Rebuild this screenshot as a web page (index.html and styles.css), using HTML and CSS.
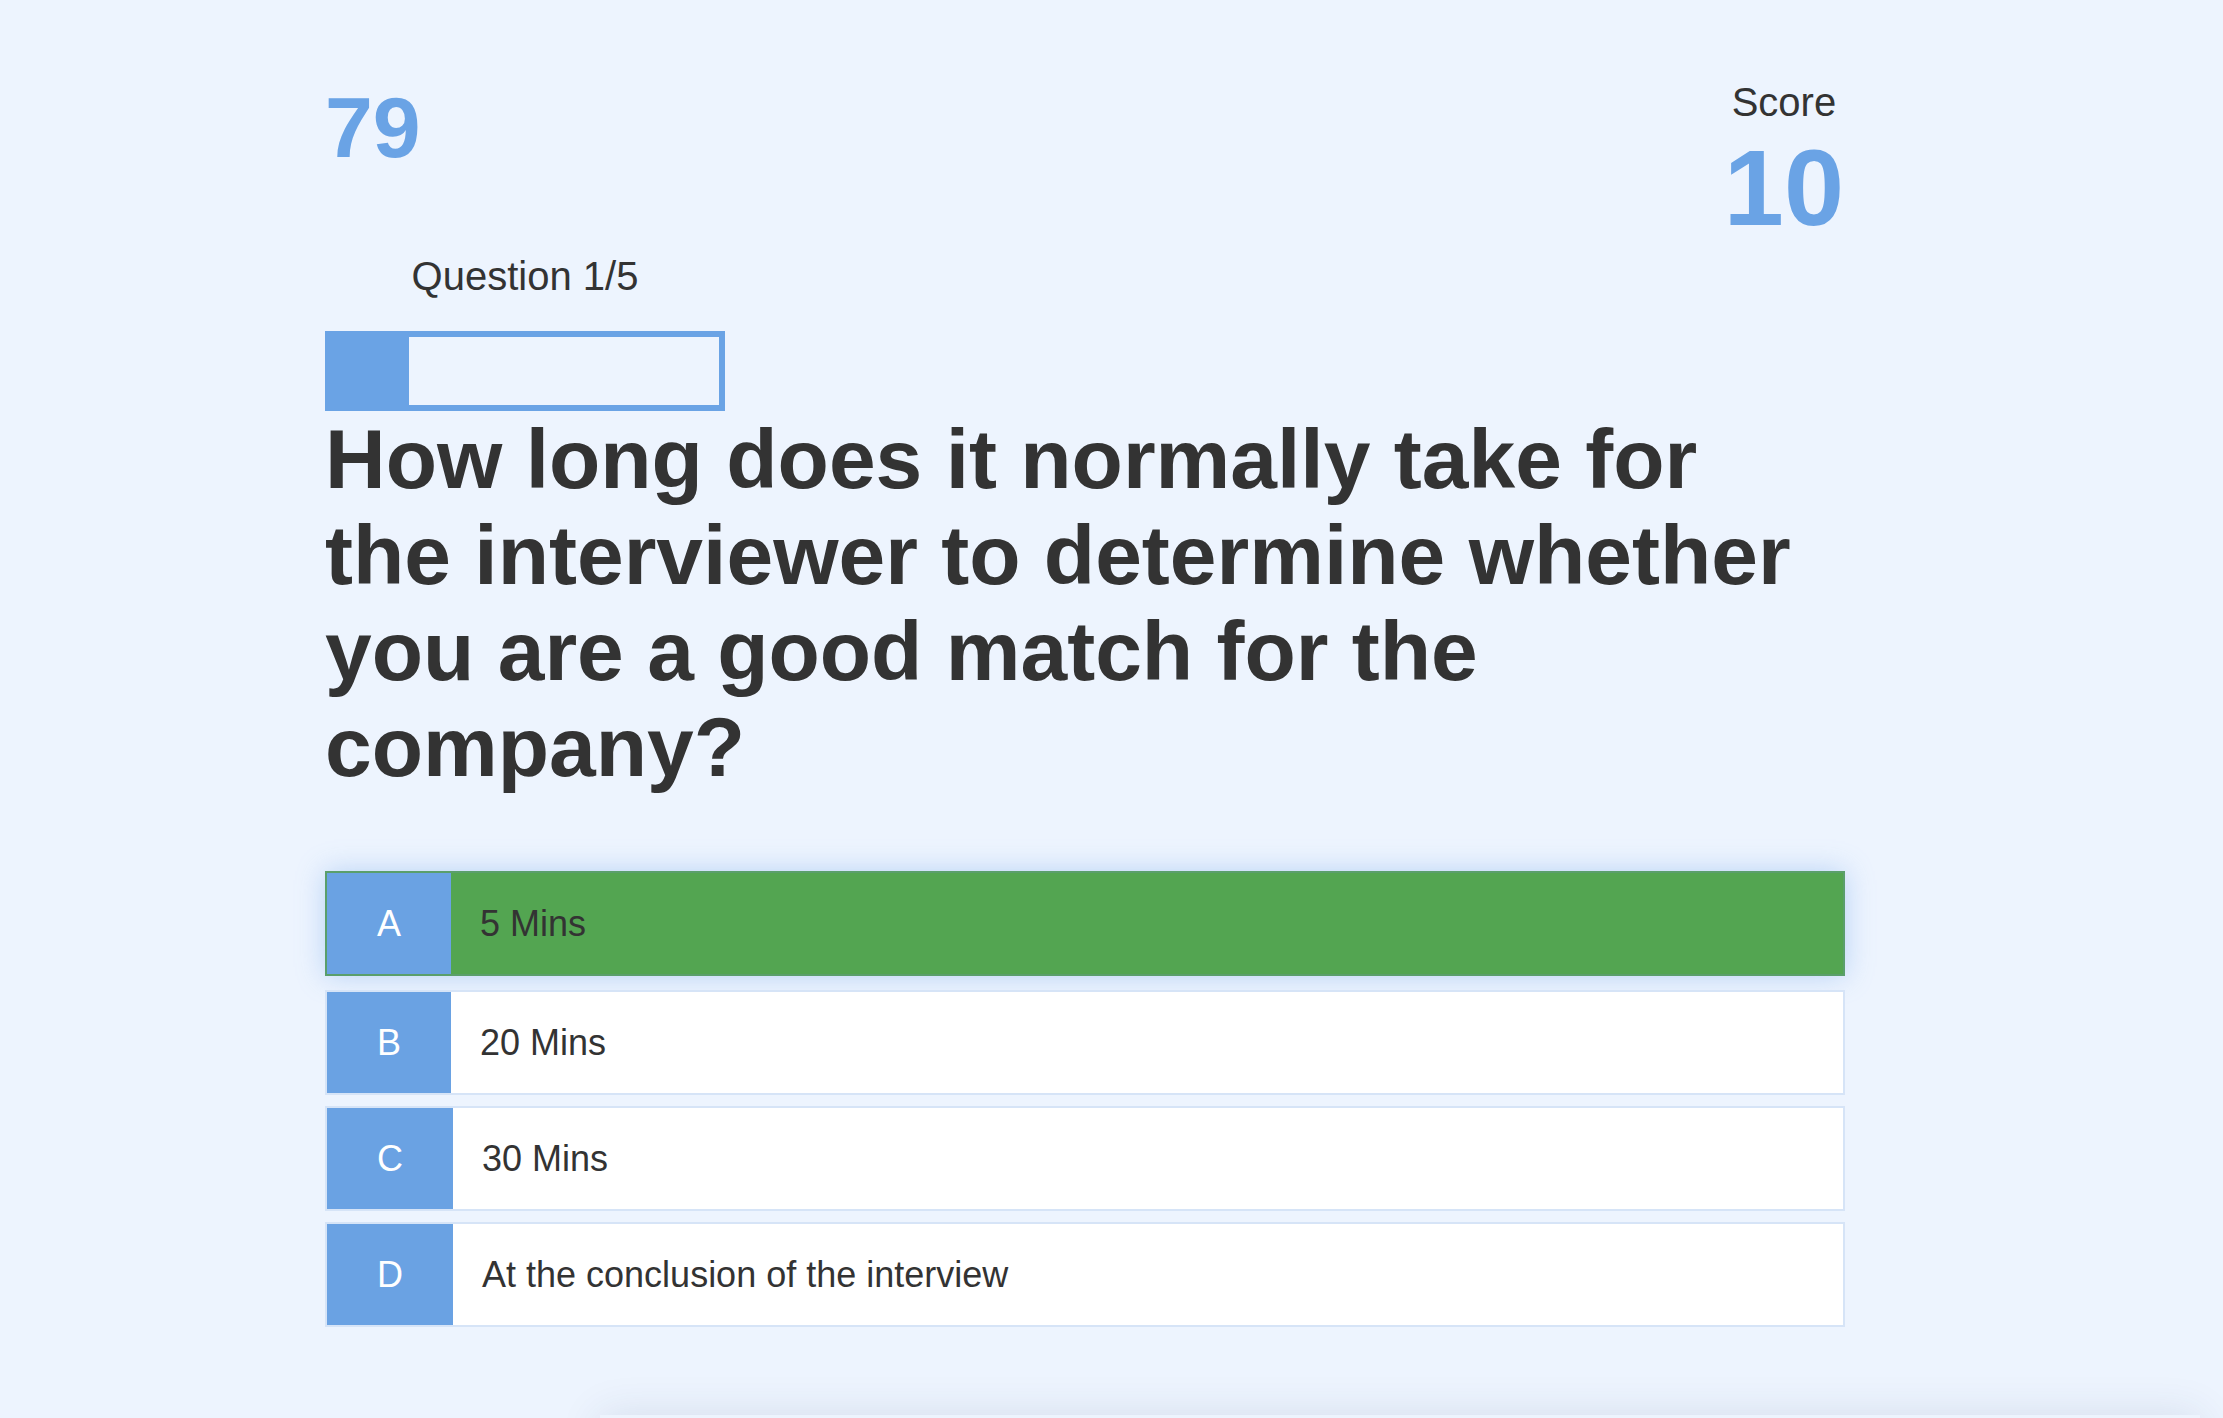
FILE: index.html
```html
<!DOCTYPE html>
<html lang="en">
<head>
<meta charset="utf-8">
<title>Quiz</title>
<link rel="stylesheet" href="styles.css">
</head>
<body>
<main class="quiz">
  <header class="top">
    <div class="timer">79</div>
    <div class="score">
      <div class="score-label">Score</div>
      <div class="score-value">10</div>
    </div>
  </header>
  <section class="progress-wrap">
    <div class="progress-label">Question 1/5</div>
    <div class="progress"><div class="progress-fill" style="width:20%"></div></div>
  </section>
  <h1 class="question">How long does it normally take for the interviewer to determine whether you are a good match for the company?</h1>
  <ul class="options">
    <li class="option selected"><span class="letter">A</span><span class="text">5 Mins</span></li>
    <li class="option"><span class="letter">B</span><span class="text">20 Mins</span></li>
    <li class="option"><span class="letter">C</span><span class="text">30 Mins</span></li>
    <li class="option"><span class="letter">D</span><span class="text">At the conclusion of the interview</span></li>
  </ul>
</main>
<div class="below-card"></div>
</body>
</html>
```
FILE: styles.css
```css
html, body {
  margin: 0;
  padding: 0;
  background: #edf4fe;
  font-family: "Liberation Sans", Arial, Helvetica, sans-serif;
  color: #333333;
  overflow: hidden;
}

.quiz {
  width: 1520px;
  margin-left: 325px;
  padding-top: 83px;
}

.top {
  display: flex;
  justify-content: space-between;
  align-items: flex-start;
}

.timer {
  font-size: 86px;
  line-height: 88px;
  font-weight: bold;
  color: #6aa3e5;
}

.score {
  text-align: center;
  margin-top: -1px;
  margin-right: 1px;
}

.score-label {
  font-size: 40px;
  line-height: 40px;
}

.score-value {
  margin-top: 10px;
  font-size: 108px;
  line-height: 112px;
  font-weight: bold;
  color: #6aa3e5;
}

.progress-wrap {
  width: 400px;
  margin-top: 12px;
}

.progress-label {
  font-size: 40px;
  line-height: 40px;
  text-align: center;
}

.progress {
  margin-top: 35px;
  height: 68px;
  border: 6px solid #6aa3e5;
  background: #edf4fe;
}

.progress-fill {
  height: 100%;
  background: #6aa3e5;
}

.question {
  margin: 0;
  font-size: 84px;
  line-height: 96px;
  font-weight: bold;
  color: #333333;
}

.options {
  list-style: none;
  margin: 76px 0 0;
  padding: 0;
  display: flex;
  flex-direction: column;
  gap: 11px;
}

.option {
  display: flex;
  align-items: stretch;
  height: 101px;
  border: 2px solid #d6e4f7;
  background: #ffffff;
  font-size: 36px;
}

.option.selected {
  background: #53a551;
  border-color: #5a9f6b;
  box-shadow: 0 0 26px rgba(120, 170, 235, 0.45);
  margin-bottom: 3px;
}

.letter {
  width: 124px;
  flex: none;
  display: flex;
  align-items: center;
  justify-content: center;
  background: #6aa2e3;
  color: #ffffff;
}

.option:nth-child(n+3) .letter {
  width: 126px;
}

.text {
  display: flex;
  align-items: center;
  padding-left: 29px;
  color: #333333;
}

.below-card {
  width: 1600px;
  height: 300px;
  margin: 88px 0 0 600px;
  background: #edf4fe;
  box-shadow: 0 0 40px rgba(40, 60, 110, 0.12);
}
```
